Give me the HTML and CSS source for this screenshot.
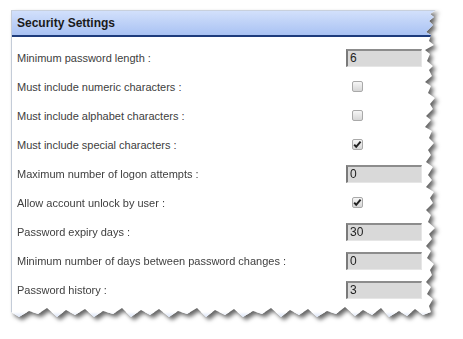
FILE: index.html
```html
<!DOCTYPE html>
<html lang="en">
<head>
<meta charset="utf-8">
<title>Security Settings</title>
<link rel="stylesheet" href="styles.css">
</head>
<body>
<div class="sheet">
  <section class="panel">
    <header class="panel-head">Security Settings</header>
    <div class="panel-body">
      <div class="row"><span class="label">Minimum password length :</span><span class="field">6</span></div>
      <div class="row"><span class="label">Must include numeric characters :</span><span class="check"></span></div>
      <div class="row"><span class="label">Must include alphabet characters :</span><span class="check"></span></div>
      <div class="row"><span class="label">Must include special characters :</span><span class="check on"><svg viewBox="0 0 11 11" width="11" height="11"><path d="M2.2 5.6 L4.2 7.8 L8.6 2.6" fill="none" stroke="#222" stroke-width="2"/></svg></span></div>
      <div class="row"><span class="label">Maximum number of logon attempts :</span><span class="field">0</span></div>
      <div class="row"><span class="label">Allow account unlock by user :</span><span class="check on"><svg viewBox="0 0 11 11" width="11" height="11"><path d="M2.2 5.6 L4.2 7.8 L8.6 2.6" fill="none" stroke="#222" stroke-width="2"/></svg></span></div>
      <div class="row"><span class="label">Password expiry days :</span><span class="field">30</span></div>
      <div class="row"><span class="label">Minimum number of days between password changes :</span><span class="field">0</span></div>
      <div class="row"><span class="label">Password history :</span><span class="field">3</span></div>
      <div class="next-head"></div>
    </div>
  </section>
</div>
</body>
</html>
```

FILE: styles.css
```css
html, body {
  margin: 0;
  padding: 0;
  background: #ffffff;
}
body {
  width: 463px;
  height: 339px;
  overflow: hidden;
  font-family: "Liberation Sans", Arial, sans-serif;
}
.sheet {
  margin: 10px 0 0 11px;
  width: 426px;
  filter: drop-shadow(3px 3px 2px rgba(0, 0, 0, 0.6));
}
.panel {
  width: 426px;
  height: 310px;
  background: #ffffff;
  box-sizing: border-box;
  border-left: 1px solid #c4ccd8;
  border-top: 1px solid #c8d0dc;
  display: flex;
  flex-direction: column;
  clip-path: polygon(
    0 0, 425px 0, 419px 4px, 423px 7px, 418px 11px, 422px 15px, 415px 22px, 420px 25px, 418px 31px, 423px 35px,
    414px 40px, 419px 44px, 416px 51px, 422px 56px, 418px 60px, 421px 66px, 414px 72px, 420px 76px, 417px 83px,
    424px 88px, 419px 94px, 422px 99px, 415px 106px, 420px 110px, 414px 117px, 421px 121px, 418px 128px,
    423px 133px, 417px 140px, 420px 145px, 415px 152px, 422px 157px, 417px 165px, 421px 170px, 415px 177px,
    423px 182px, 419px 188px, 422px 193px, 415px 200px, 420px 205px, 417px 212px, 424px 218px, 418px 224px,
    421px 229px, 415px 236px, 420px 241px, 416px 248px, 423px 254px, 419px 260px, 421px 265px, 415px 272px,
    420px 277px, 416px 284px, 422px 289px, 418px 296px, 420px 302px,
    412px 305px, 404px 299px, 396px 306px, 388px 301px, 378px 307px, 370px 298px, 361px 305px, 352px 300px,
    344px 306px, 334px 297px, 325px 304px, 316px 301px, 306px 307px, 297px 299px, 288px 305px, 279px 300px,
    270px 307px, 260px 298px, 251px 304px, 242px 301px, 232px 307px, 223px 299px, 214px 305px, 204px 300px,
    195px 307px, 186px 298px, 176px 304px, 167px 301px, 158px 307px, 148px 299px, 139px 305px, 130px 300px,
    120px 307px, 111px 298px, 102px 304px, 92px 301px, 83px 307px, 74px 299px, 64px 305px, 55px 300px,
    46px 307px, 36px 298px, 27px 304px, 18px 301px, 8px 307px, 0 302px
  );
}
.panel-head {
  box-sizing: border-box;
  padding-left: 5px;
  display: flex;
  align-items: center;
  background: linear-gradient(#d2e0fb, #a9c2f3);
  border-bottom: 2px solid #1e3c7c;
  font-weight: bold;
  font-size: 12px;
  color: #1a1a1a;
  height: 26px;
}
.panel-body {
  flex: 1;
  padding: 6px 0 0 5px;
  display: flex;
  flex-direction: column;
}
.row {
  height: 29px;
  display: grid;
  grid-template-columns: 329px 80px;
  align-items: center;
}
.label {
  font-size: 11px;
  color: #404040;
}
.field {
  width: 76px;
  height: 18px;
  box-sizing: border-box;
  background: #d9d9d9;
  border-style: solid;
  border-width: 2px 1px 1px 2px;
  border-color: #8c8c8c #e6e6e6 #e6e6e6 #7a7a7a;
  font-size: 12px;
  line-height: 15px;
  padding-left: 2px;
  color: #222222;
}
.check {
  margin-left: 6px;
  width: 11px;
  height: 11px;
  box-sizing: border-box;
  border: 1px solid #a9a9a9;
  border-radius: 2px;
  background: linear-gradient(#f6f6f6, #d6d6d6);
  display: flex;
  align-items: center;
  justify-content: center;
}
.check svg {
  display: block;
  flex: none;
}
.next-head {
  margin: auto 0 0 -5px;
  height: 8px;
  background: linear-gradient(#ffffff, #c3d3f3);
}
```
